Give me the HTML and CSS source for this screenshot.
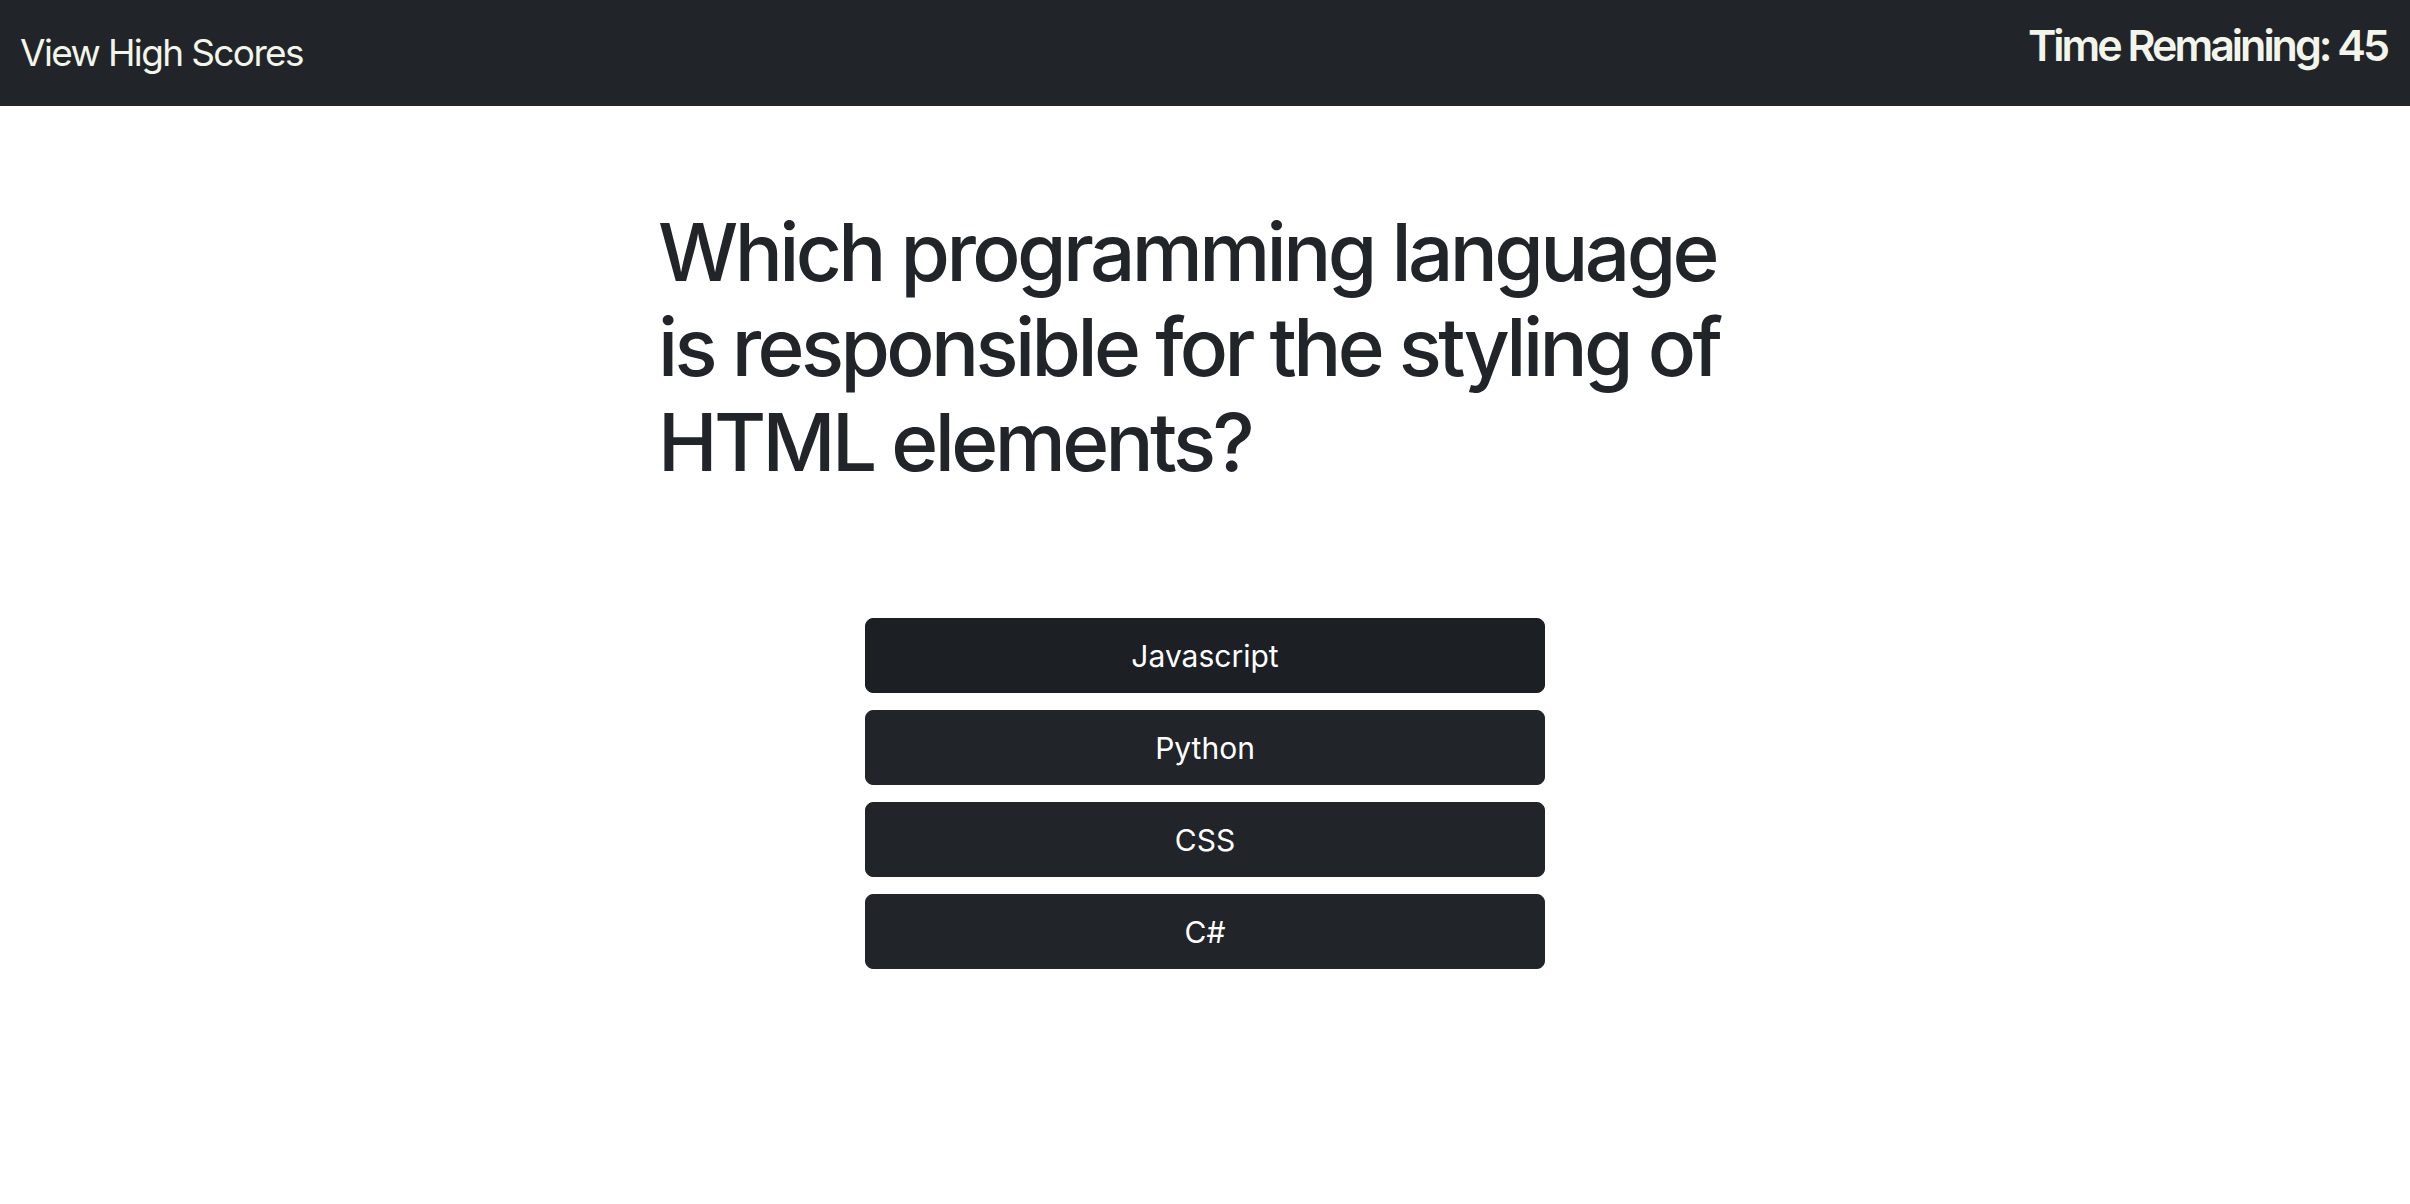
FILE: index.html
```html
<!DOCTYPE html>
<html lang="en">
<head>
<meta charset="utf-8">
<title>Code Quiz</title>
<link rel="stylesheet" href="styles.css">
</head>
<body>
<nav class="navbar">
  <a class="nav-link" href="#">View High Scores</a>
  <div class="timer">Time Remaining: 45</div>
</nav>
<main class="quiz">
  <h1 class="question">Which programming language is responsible for the styling of HTML elements?</h1>
  <div class="answers">
    <button class="answer is-hover">Javascript</button>
    <button class="answer">Python</button>
    <button class="answer">CSS</button>
    <button class="answer">C#</button>
  </div>
</main>
</body>
</html>
```

FILE: styles.css
```css
html, body {
  margin: 0;
  padding: 0;
  background: #ffffff;
  font-family: Inter, "Noto Sans", "Liberation Sans", sans-serif;
  color: #212529;
}

.navbar {
  height: 106px;
  background: #212529;
  display: flex;
  justify-content: space-between;
  align-items: flex-start;
  padding: 0 23px 0 20px;
  box-sizing: border-box;
}

.nav-link {
  color: #f2f6ea;
  text-decoration: none;
  font-size: 37px;
  letter-spacing: -0.044em;
  line-height: 1;
  padding-top: 34px;
}

.timer {
  color: #f2f6ea;
  font-size: 43px;
  font-weight: 600;
  letter-spacing: -0.07em;
  line-height: 1;
  padding-top: 24px;
}

.quiz {
  display: flex;
  flex-direction: column;
  align-items: center;
}

.question {
  width: 1094px;
  margin: 98px 0 0;
  font-size: 80px;
  font-weight: 500;
  letter-spacing: -0.045em;
  line-height: 95px;
  color: #212529;
}

.answers {
  width: 680px;
  margin-top: 129px;
  display: flex;
  flex-direction: column;
  gap: 17px;
}

.answer {
  height: 75px;
  border: 1px solid #212529;
  border-radius: 8px;
  background: #212529;
  color: #ffffff;
  font-family: Inter, "Noto Sans", "Liberation Sans", sans-serif;
  font-size: 30px;
  cursor: pointer;
}

.answer.is-hover {
  background: #1c1f23;
  border-color: #1a1e21;
}
```
